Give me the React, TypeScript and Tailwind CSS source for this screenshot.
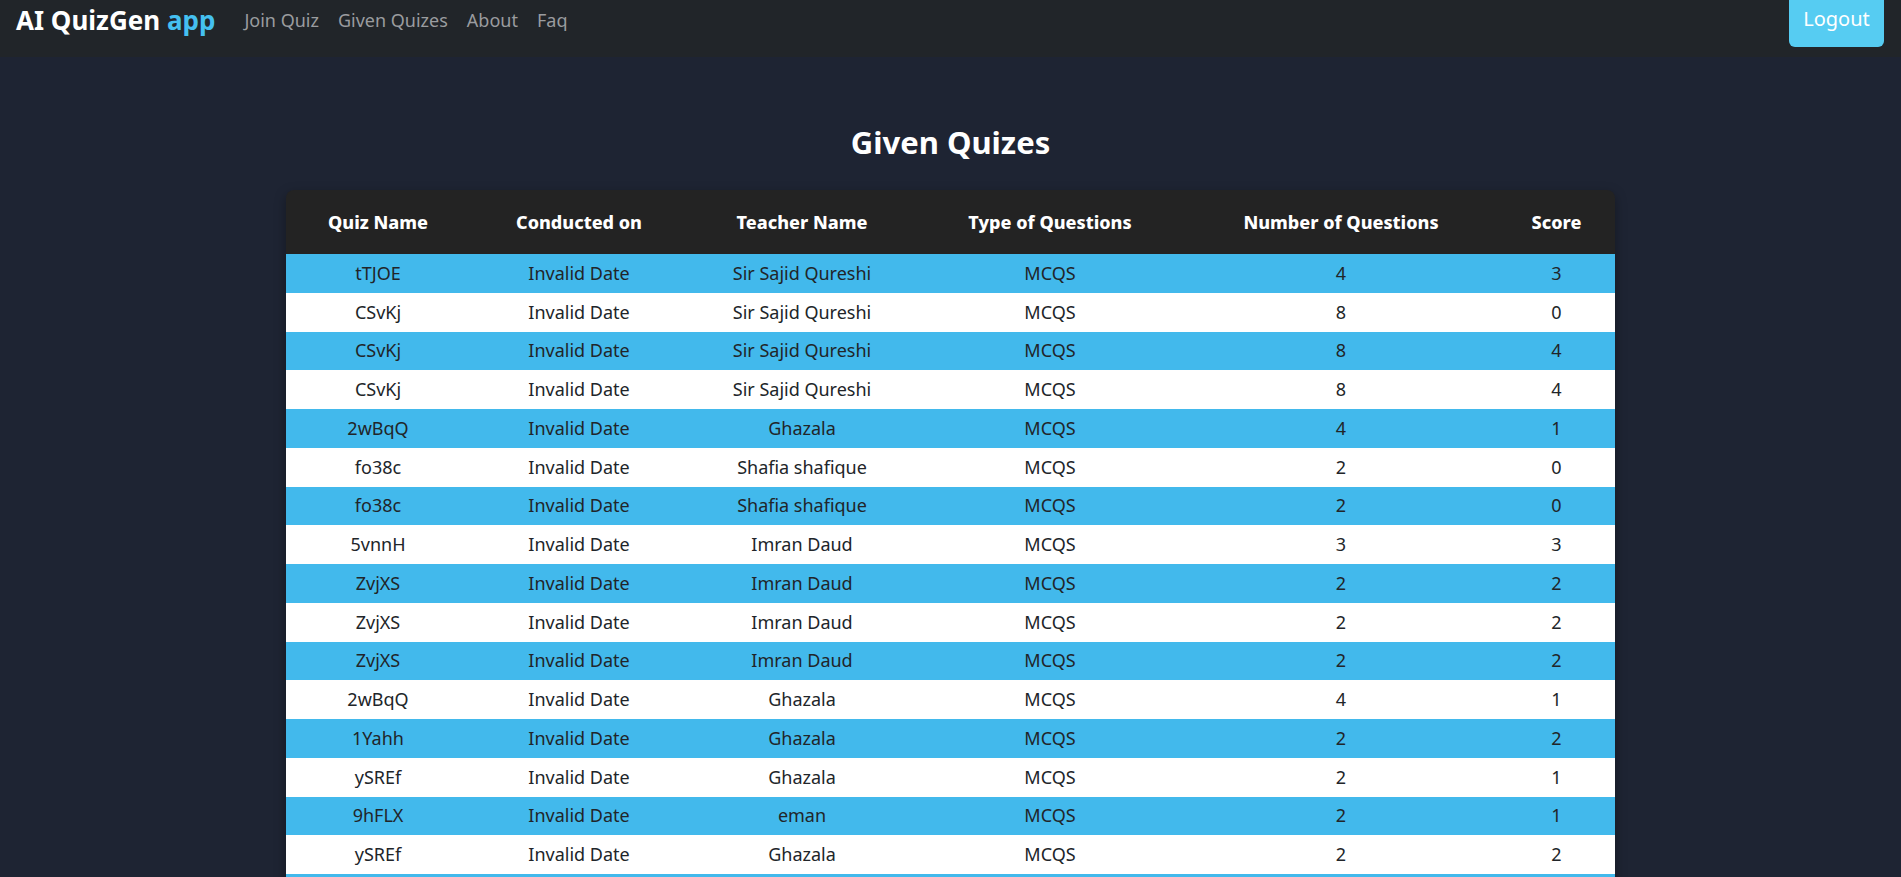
import React from 'react';

type Row = {
  quiz: string;
  date: string;
  teacher: string;
  type: string;
  count: number;
  score: number;
};

const rows: Row[] = [
  { quiz: 'tTJOE', date: 'Invalid Date', teacher: 'Sir Sajid Qureshi', type: 'MCQS', count: 4, score: 3 },
  { quiz: 'CSvKj', date: 'Invalid Date', teacher: 'Sir Sajid Qureshi', type: 'MCQS', count: 8, score: 0 },
  { quiz: 'CSvKj', date: 'Invalid Date', teacher: 'Sir Sajid Qureshi', type: 'MCQS', count: 8, score: 4 },
  { quiz: 'CSvKj', date: 'Invalid Date', teacher: 'Sir Sajid Qureshi', type: 'MCQS', count: 8, score: 4 },
  { quiz: '2wBqQ', date: 'Invalid Date', teacher: 'Ghazala', type: 'MCQS', count: 4, score: 1 },
  { quiz: 'fo38c', date: 'Invalid Date', teacher: 'Shafia shafique', type: 'MCQS', count: 2, score: 0 },
  { quiz: 'fo38c', date: 'Invalid Date', teacher: 'Shafia shafique', type: 'MCQS', count: 2, score: 0 },
  { quiz: '5vnnH', date: 'Invalid Date', teacher: 'Imran Daud', type: 'MCQS', count: 3, score: 3 },
  { quiz: 'ZvjXS', date: 'Invalid Date', teacher: 'Imran Daud', type: 'MCQS', count: 2, score: 2 },
  { quiz: 'ZvjXS', date: 'Invalid Date', teacher: 'Imran Daud', type: 'MCQS', count: 2, score: 2 },
  { quiz: 'ZvjXS', date: 'Invalid Date', teacher: 'Imran Daud', type: 'MCQS', count: 2, score: 2 },
  { quiz: '2wBqQ', date: 'Invalid Date', teacher: 'Ghazala', type: 'MCQS', count: 4, score: 1 },
  { quiz: '1Yahh', date: 'Invalid Date', teacher: 'Ghazala', type: 'MCQS', count: 2, score: 2 },
  { quiz: 'ySREf', date: 'Invalid Date', teacher: 'Ghazala', type: 'MCQS', count: 2, score: 1 },
  { quiz: '9hFLX', date: 'Invalid Date', teacher: 'eman', type: 'MCQS', count: 2, score: 1 },
  { quiz: 'ySREf', date: 'Invalid Date', teacher: 'Ghazala', type: 'MCQS', count: 2, score: 2 },
  { quiz: 'eman1', date: 'Invalid Date', teacher: 'eman', type: 'MCQS', count: 2, score: 1 },
];

const cols = 'grid grid-cols-[184px_218px_228px_268px_314px_117px]';

export default function App() {
  return (
    <div className="min-h-screen bg-[#1e2433]" style={{ fontFamily: '"Noto Sans", "Open Sans", sans-serif' }}>
      <nav className="flex h-[57px] items-start justify-between bg-[#212529] pl-4 pr-[17px]">
        <div className="flex items-center gap-[29px] pt-[1px]">
          <a className="text-[26px] font-bold text-white">
            AI QuizGen <span className="text-[#45c0f0]">app</span>
          </a>
          <div className="flex items-center gap-[19px] text-[18px] text-[#9a9c9f]">
            <a>Join Quiz</a>
            <a>Given Quizes</a>
            <a>About</a>
            <a>Faq</a>
          </div>
        </div>
        <button className="h-[47px] w-[95px] rounded-b-md bg-[#56ccf2] pb-[10px] text-[20px] text-white">Logout</button>
      </nav>

      <main className="flex flex-col items-center">
        <h1 className="mt-[65px] h-[68px] text-[31px] font-bold leading-[40px] text-white">Given Quizes</h1>

        <div className="w-[1329px] overflow-hidden rounded-t-lg shadow-[0_4px_12px_rgba(0,0,0,0.35)]">
          <div className={`${cols} h-[64px] items-center bg-[#232323] text-center text-[18px] font-extrabold text-white`}>
            <div>Quiz Name</div>
            <div>Conducted on</div>
            <div>Teacher Name</div>
            <div>Type of Questions</div>
            <div>Number of Questions</div>
            <div>Score</div>
          </div>
          {rows.map((r, i) => (
            <div
              key={i}
              className={`${cols} h-[38.75px] items-center text-center text-[18px] text-[#212529] ${
                i % 2 === 0 ? 'bg-[#42b9ec]' : 'bg-white'
              }`}
            >
              <div>{r.quiz}</div>
              <div>{r.date}</div>
              <div>{r.teacher}</div>
              <div>{r.type}</div>
              <div>{r.count}</div>
              <div>{r.score}</div>
            </div>
          ))}
        </div>
      </main>
    </div>
  );
}
